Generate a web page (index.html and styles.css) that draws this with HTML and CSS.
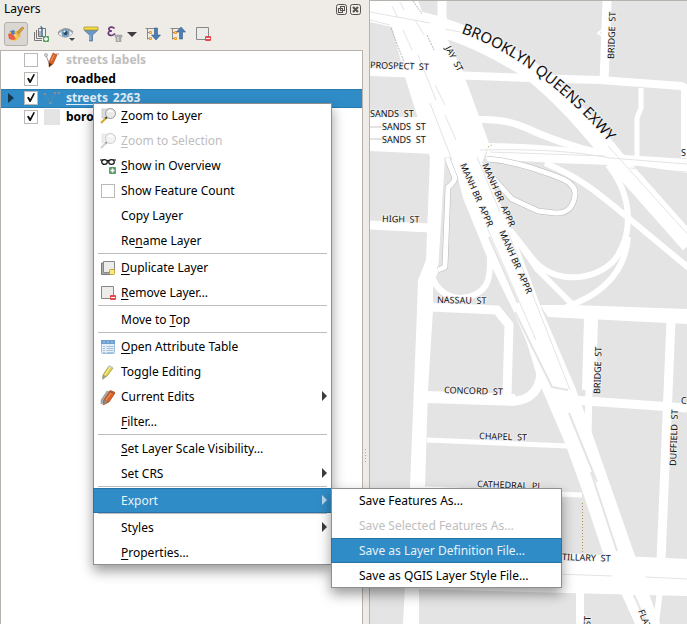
FILE: index.html
```html
<!DOCTYPE html>
<html lang="en">
<head>
<meta charset="utf-8">
<title>Layers</title>
<link rel="stylesheet" href="styles.css">
</head>
<body>
<svg class="defs" aria-hidden="true">
  <defs>
    <symbol id="i-brush" viewBox="0 0 16 16"><path d="M1 5l4 1 2 4 4-1-1 5-5 1-4-3z" fill="#f3c94c"/><path d="M0 8l4-1 4 6-3 1-4-1z" fill="#e8604a"/><path d="M2 5l4-1 2 3-3 2z" fill="#4b7fc0"/><path d="M6 6l3-1 4 4-2 3z" fill="#f1b73c"/><path d="M9 6l5-5 2 1-5 6z" fill="#d99a3a" stroke="#a8702a" stroke-width=".5"/></symbol>
    <symbol id="i-group" viewBox="0 0 16 16"><path d="M1.500 6v8.500H9M3.500 4v8.500H9" fill="none" stroke="#777"/><path d="M5.500 2.500h7v8h-7z" fill="#eee" stroke="#777"/><path d="M9 11V2.500q0-2-1.500-1.500" fill="none" stroke="#2f6598" stroke-width="1.400"/><path d="M7 5v6" stroke="#777"/><rect x="10" y="10" width="6" height="6" rx="1" fill="#5b9e66"/><path d="M13 11v4M11 13h4" stroke="#fff" stroke-width="1.300"/></symbol>
    <symbol id="i-eye" viewBox="0 0 18 16"><path d="M1 8Q8 0 16 7Q9 15 1 8z" fill="#f4f4f4" stroke="#aaa"/><path d="M1 7Q8-1 16 6" fill="none" stroke="#999" stroke-width="1.300"/><circle cx="8.500" cy="7" r="4" fill="#6f9cc4"/><circle cx="8.500" cy="7" r="2" fill="#28455f"/><circle cx="7.500" cy="5.500" r="1" fill="#fff"/><path d="M12 12h6l-3 3z" fill="#444"/></symbol>
    <symbol id="i-filter" viewBox="0 0 16 16"><path d="M1 4l5.500 5v6h3V9L15 4z" fill="#6c97c5" stroke="#50779f" stroke-width=".8"/><path d="M7 9v5" stroke="#a8c5e3"/><path d="M1 1h14v3H1z" fill="#f3dd3f" stroke="#a99b3b" stroke-width=".8"/></symbol>
    <symbol id="i-expr" viewBox="0 0 16 16"><path d="M7.500 2.500Q6 .8 4 1.200Q1.300 1.800 2 3.600Q2.500 5 5 5Q1 5 1.300 7.500Q1.800 9.500 4.500 9.500Q6.500 9.300 8 7.500" fill="none" stroke="#6a3c78" stroke-width="1.700"/><path d="M8 9h7v2l-1 1v4h-5v-4l-1-1z" fill="#aaa" stroke="#999" stroke-width=".5"/><path d="M11 11v4" stroke="#eee"/></symbol>
    <symbol id="i-expand" viewBox="0 0 16 16"><path d="M.5 2.500h9M2.500 2v11.500M2 6.500h3M2 12.500h3" fill="none" stroke="#888"/><path d="M4.500 5.500h2v2h-2zM4.500 11.500h2v2h-2z" fill="#fbe0a8" stroke="#f09a1e"/><path d="M9.500 2h3v7h3L11 14 6.500 9h3z" fill="#4b7db3" stroke="#37608c" stroke-width=".6"/></symbol>
    <symbol id="i-collapse" viewBox="0 0 16 16"><path d="M.5 2.500h9M2.500 2v11.500M2 6.500h3M2 12.500h3" fill="none" stroke="#888"/><path d="M4.500 5.500h2v2h-2zM4.500 11.500h2v2h-2z" fill="#fbe0a8" stroke="#f09a1e"/><path d="M9.500 13h3V6h3L11 1 6.500 6h3z" fill="#4b7db3" stroke="#37608c" stroke-width=".6"/></symbol>
    <symbol id="i-remove" viewBox="0 0 16 16"><path d="M1.500 1.500h12v12h-12z" fill="#ececea" stroke="#888"/><rect x="10" y="10" width="6" height="5" rx="1" fill="#e8474c"/><path d="M11 12.500h4" stroke="#fff"/></symbol>
    <symbol id="i-duplicate" viewBox="0 0 16 16"><path d="M1.500 3v11.500h10V3z" fill="#aaa" stroke="#777"/><path d="M3.500 1.500h11v11h-11z" fill="#ececea" stroke="#888"/><rect x="9.500" y="9.500" width="5" height="5" rx="1" fill="#f6e889" stroke="#c9a227"/></symbol>
    <symbol id="i-zoom" viewBox="0 0 16 16"><path d="M2 1h8v9H2z" fill="#ddd" stroke="#bbb" stroke-width=".6"/><path d="M6 10l-5 5" stroke="#d9a72b" stroke-width="2.200"/><path d="M7.500 8.500l-2 2" stroke="#444" stroke-width="2"/><circle cx="10.500" cy="5.500" r="5" fill="#e9e9e7" stroke="#999"/><path d="M8 4q2-2 5 0" stroke="#fff" fill="none" stroke-width="1.500"/></symbol>
    <symbol id="i-overview" viewBox="0 0 16 16"><path d="M0 2h3M7 3q1-1 2 0M13 2h3" fill="none" stroke="#111" stroke-width="1.200"/><ellipse cx="4.500" cy="4" rx="2.800" ry="2.400" fill="#fff" stroke="#111" stroke-width="1.200"/><ellipse cx="11.500" cy="4" rx="2.800" ry="2.400" fill="#fff" stroke="#111" stroke-width="1.200"/><rect x="9" y="9" width="7" height="7" rx="1" fill="#5b9e66"/><path d="M12.500 10.500v4M10.500 12.500h4" stroke="#fff" stroke-width="1.500"/></symbol>
    <symbol id="i-table" viewBox="0 0 16 16"><rect x="1.500" y="1.500" width="13" height="13" rx="1" fill="#e6eff8" stroke="#9bbfe0"/><path d="M1 1h14v4H1z" fill="#6d9fce"/><path d="M3 7.500h2M6.500 7.500h7M3 9.500h2M6.500 9.500h7M3 11.500h2M6.500 11.500h7M3 13.500h2M6.500 13.500h7" stroke="#a5c1dc"/><path d="M3 3h2M7 3h2M11 3h2" stroke="#a9cbea"/></symbol>
    <symbol id="i-pencil" viewBox="0 0 16 16"><path d="M3 11L9 2l4 2-6 8-4 3z" fill="#e3d655" stroke="#9c9540" stroke-width=".8"/><path d="M9 1l4 2-1 2-4-2z" fill="#c9c9c9"/><path d="M3 11l3 1-4 4z" fill="#999"/><path d="M5 11l5-8" stroke="#f7f0a0"/></symbol>
    <symbol id="i-pencils" viewBox="0 0 16 16"><path d="M1 11l6-9 3 1-6 10-3 2z" fill="#a8a8a8" stroke="#888" stroke-width=".5"/><path d="M4 11l6-9 5 2-6 9-6 3z" fill="#d8662c" stroke="#a5491a" stroke-width=".8"/><path d="M10 1l5 2-1 2-5-2z" fill="#b35a30"/><path d="M4 11l4 2-5 3z" fill="#888"/><path d="M6 11l5-7" stroke="#f09a62"/></symbol>
    <symbol id="i-editlayer" viewBox="0 0 16 16"><path d="M2 3l4 11 6-12h3" fill="none" stroke="#999"/><circle cx="2" cy="3" r="1.500" fill="#ddd" stroke="#888" stroke-width=".6"/><path d="M5 10l4-9 4 2-4 9-4 3z" fill="#dc6127" stroke="#ad4516" stroke-width=".6"/><path d="M5 11l3 1-3 3z" fill="#333"/><path d="M7 9l3-6" stroke="#f39b66"/></symbol>
    <symbol id="i-line" viewBox="0 0 16 16"><path d="M1.500 4l5 9 5-10h4" fill="none" stroke="#5c87a5" stroke-width="1"/><path d="M0 3h2v2H0zM5 12h3v2H5zM10 2h2v2h-2zM14 2h2v2h-2z" fill="#7d929f"/></symbol>
  </defs>
</svg>
<main class="window">
  <section class="dock">
    <header class="dock-title">
      <h1>Layers</h1>
      <button class="win-btn" aria-label="Float"><svg viewBox="0 0 11 11"><rect x=".5" y=".5" width="10" height="10" rx="2"/><rect x="4.500" y="2.500" width="4" height="4"/><rect x="2.500" y="4.500" width="4" height="4"/></svg></button>
      <button class="win-btn" aria-label="Close"><svg viewBox="0 0 11 11"><rect x=".5" y=".5" width="10" height="10" rx="2"/><path d="M3 3l5 5M8 3l-5 5" stroke-width="2"/></svg></button>
    </header>
    <div class="toolbar">
      <button class="tool pressed" aria-label="Open layer styling"><svg><use href="#i-brush"/></svg></button>
      <button class="tool" aria-label="Add group"><svg><use href="#i-group"/></svg></button>
      <button class="tool" aria-label="Manage map themes"><svg class="wide"><use href="#i-eye"/></svg></button>
      <button class="tool" aria-label="Filter legend"><svg><use href="#i-filter"/></svg></button>
      <button class="tool split" aria-label="Filter by expression"><svg><use href="#i-expr"/></svg><span class="drop"></span></button>
      <button class="tool" aria-label="Expand all"><svg><use href="#i-expand"/></svg></button>
      <button class="tool" aria-label="Collapse all"><svg><use href="#i-collapse"/></svg></button>
      <button class="tool" aria-label="Remove layer"><svg><use href="#i-remove"/></svg></button>
    </div>
    <ul class="tree">
      <li class="layer off"><span class="twisty"></span><input type="checkbox" id="l1"><svg><use href="#i-editlayer"/></svg><label for="l1">streets labels</label></li>
      <li class="layer"><span class="twisty"></span><input type="checkbox" id="l2" checked><span class="blank"></span><label for="l2">roadbed</label></li>
      <li class="layer current"><span class="twisty open"></span><input type="checkbox" id="l3" checked><svg><use href="#i-line"/></svg><label for="l3">streets_2263</label></li>
      <li class="layer"><span class="twisty"></span><input type="checkbox" id="l4" checked><span class="blank fill"></span><label for="l4">boro</label></li>
    </ul>
  </section>
  <div class="splitter"></div>
  <section class="map">
    <svg viewBox="370 1 317 623" preserveAspectRatio="xMinYMin slice">
      <g class="road">
        <path class="area" d="M370 0H418L422 12L447 18V38L462 70L489 143L482 163L512 230L542 310L575 387L592 433L612 490L633 550L660 624H635L603 553L582 490L565 443L538 380L527 343L513 310L487 257L463 198L458 178L446 157H430L405 77L392 27L370 22z"/>
        <path class="area" d="M428 145H450L445 157L438 272L433 283V310L428 390L425 487L419 590V624H403L410 487L417 310L418 280L426 260L430 157z"/>
        <path class="area" d="M370 117H432V154L370 151z"/>
        <path class="area" d="M540 305H572L687 309V324L548 317z"/>
        <path class="area" d="M415 548L600 555L687 559V596L415 589z"/>
        <path class="area" d="M488 143Q560 144 600 153L625 155L687 159V173L640 166L555 163L486 159z"/>
        <path d="M365 12C430 18 480 38 527 68C560 92 590 128 620 165L690 244" stroke-width="19"/>
        <path d="M370 72L530 78L600 80L681 86Q686 87 685 94V158" stroke-width="8"/>
        <path d="M607 0L604 82M442 0V25M671 320L664 490L661 560" stroke-width="9"/>
        <path d="M602 30l-4 3l4 3" stroke-width="2"/>
        <path d="M641 88V108L637 118V158" stroke-width="5"/>
        <path d="M470 120C510 117 525 128 540 134S580 150 610 155" stroke-width="7"/>
        <path d="M608 165C632 195 633 230 618 255S555 288 532 258L510 230" stroke-width="6"/>
        <path d="M545 163C585 180 600 195 626 216L690 269" stroke-width="6"/>
        <path d="M512 233L538 270L576 308M628 237Q624 287 566 307" stroke-width="6"/>
        <path d="M433 279C440 296 458 302 474 295S490 275 490 258" stroke-width="6"/>
        <path d="M370 225L430 228" stroke-width="9"/>
        <path d="M430 307L497 310L509 325L507 394" stroke-width="9"/>
        <path d="M427 397L515 400" stroke-width="12"/>
        <path d="M512 401C532 401 540 388 541 372" stroke-width="9"/>
        <path d="M427 440L568 446M425 489L582 495" stroke-width="5"/>
        <path d="M591 318L589 390" stroke-width="14"/>
        <path d="M589 385L588 440L596 470" stroke-width="7"/>
        <path d="M572 400L687 408" stroke-width="9"/>
        <path d="M580 590V624" stroke-width="8"/>
        <path d="M660 590L656 624" stroke-width="6"/>
      </g>
      <g class="cased">
        <path class="case" d="M487 159Q505 160 532 168C560 177 576 182 575 194S568 214 555 213L538 211L512 199L492 177"/>
        <path d="M487 159Q505 160 532 168C560 177 576 182 575 194S568 214 555 213L538 211L512 199L492 177"/>
        <path class="case" d="M447 158L455 178Q454 183 448 187L445 267L438 270"/>
        <path d="M447 158L455 178Q454 183 448 187L445 267L438 270"/>
      </g>
      <g class="median">
        <path d="M370 12L430 23M370 20L390 25M403 30L412 50M392 6L398 18M415 20L424 35M418 55L436 100M435 85L445 105M445 115L456 140M430 103L452 160M477 157L500 212M486 225L536 340M508 232L570 390M445 29L460 32M480 150Q560 148 610 158L687 164M630 168L687 172M608 146L690 237M490 152L605 156M400 2L404 10"/>
        <path class="wide" d="M370 127H390M370 139H390M489 237L518 303M515 312L552 387L568 390M569 413L597 482M591 472L617 551M634 595L645 620"/>
        <path d="M415 569L612 576M645 577L687 579"/>
      </g>
      <path class="dash" d="M391 28L404 62M413 1L422 14M427 35L434 50"/>
      <path class="trail" d="M582.500 503V553M488 147l4-2"/>
      <defs>
        <path id="bqe" d="M461 33C510 50 560 86 606 139L630 168"/>
      </defs>
      <g class="label">
        <text class="big"><textPath href="#bqe">BROOKLYN QUEENS EXWY</textPath></text>
        <text transform="translate(370 68) rotate(2)">PROSPECT&#160; ST</text>
        <text transform="translate(370 117)">SANDS&#160; ST</text>
        <text transform="translate(382 130)">SANDS&#160; ST</text>
        <text transform="translate(382 143)">SANDS&#160; ST</text>
        <text transform="translate(445 48) rotate(62)">JAY&#160; ST</text>
        <text transform="translate(614 59) rotate(-88)">BRIDGE&#160; ST</text>
        <text transform="translate(382 222) rotate(1)">HIGH&#160; ST</text>
        <text transform="translate(460 165) rotate(66)">MANH BR&#160; APPR</text>
        <text transform="translate(482 165) rotate(66)">MANH BR&#160; APPR</text>
        <text transform="translate(499 232) rotate(66)">MANH BR&#160; APPR</text>
        <text transform="translate(437 303) rotate(1)">NASSAU&#160; ST</text>
        <text transform="translate(444 393) rotate(2)">CONCORD&#160; ST</text>
        <text transform="translate(479 439) rotate(2)">CHAPEL&#160; ST</text>
        <text transform="translate(477 487) rotate(2)">CATHEDRAL&#160; PL</text>
        <text transform="translate(562 560) rotate(2)">TILLARY&#160; ST</text>
        <text transform="translate(600 394) rotate(-88)">BRIDGE&#160; ST</text>
        <text transform="translate(676 466) rotate(-88)">DUFFIELD&#160; ST</text>
        <text transform="translate(681 156)">S</text>
        <text transform="translate(681 404)">CO</text>
        <text transform="translate(638 611) rotate(68)">FLATBUSH&#160; AVE</text>
        <text transform="translate(589 661) rotate(-88)">BRIDGE ST</text>
      </g>
    </svg>
  </section>
  <nav class="menu context">
    <button><svg><use href="#i-zoom"/></svg><span><u>Z</u>oom to Layer</span></button>
    <button disabled><svg class="dim"><use href="#i-zoom"/></svg><span><u>Z</u>oom to Selection</span></button>
    <button><svg><use href="#i-overview"/></svg><span><u>S</u>how in Overview</span></button>
    <label class="check"><input type="checkbox"><span>Show Feature Count</span></label>
    <button><span>Copy Layer</span></button>
    <button><span>Re<u>n</u>ame Layer</span></button>
    <hr>
    <button><svg><use href="#i-duplicate"/></svg><span><u>D</u>uplicate Layer</span></button>
    <button><svg><use href="#i-remove"/></svg><span><u>R</u>emove Layer…</span></button>
    <hr>
    <button><span>Move to <u>T</u>op</span></button>
    <hr>
    <button><svg><use href="#i-table"/></svg><span><u>O</u>pen Attribute Table</span></button>
    <button><svg><use href="#i-pencil"/></svg><span>Toggle Editing</span></button>
    <button class="more"><svg><use href="#i-pencils"/></svg><span>Current Edits</span></button>
    <button><span><u>F</u>ilter…</span></button>
    <hr>
    <button><span><u>S</u>et Layer Scale Visibility…</span></button>
    <button class="more"><span>Set CRS</span></button>
    <hr>
    <div class="branch">
      <button class="more active"><span>Export</span></button>
      <nav class="menu sub">
        <button><span>Save Features As…</span></button>
        <button disabled><span>Save Selected Features As…</span></button>
        <button class="active"><span>Save as Layer Definition File…</span></button>
        <button><span>Save as QGIS Layer Style File…</span></button>
      </nav>
    </div>
    <hr>
    <button class="more"><span>Styles</span></button>
    <button><span><u>P</u>roperties…</span></button>
  </nav>
</main>
</body>
</html>
```
FILE: styles.css
```css
* { box-sizing: border-box; }

body {
  margin: 0;
  background: #efebe7;
  color: #000;
  font: 12px/16px "Noto Sans", sans-serif;
}

button {
  margin: 0;
  padding: 0;
  border: 0;
  background: none;
  color: inherit;
  font: inherit;
}

svg { display: block; flex: none; width: 16px; height: 16px; }
.defs { position: absolute; width: 0; height: 0; }

.window {
  position: relative;
  display: flex;
  height: 100vh;
  min-height: 600px;
  overflow: hidden;
}

.dock {
  display: flex;
  flex-direction: column;
  flex: none;
  width: 363px;
}

.dock-title {
  display: flex;
  align-items: center;
  gap: 3px;
  height: 20px;
  padding: 0 2px 2px 4px;
}

.dock-title h1 { flex: 1; margin: 0; font-size: 12px; font-weight: 400; }
.win-btn svg { width: 11px; height: 11px; fill: none; stroke: #55524f; }

.toolbar {
  display: flex;
  align-items: center;
  gap: 1px;
  height: 30px;
  padding: 0 4px 2px;
}

.tool {
  display: flex;
  align-items: center;
  justify-content: center;
  width: 24px;
  height: 24px;
  border-radius: 3px;
}

.tool.pressed { border: 1px solid #b4b0ac; background: #dad6d2; }
.tool .wide { width: 18px; }
.tool.split { gap: 4px; width: 36px; }
.drop { border: 5px solid transparent; border-top-color: #3c3c3c; border-bottom: 0; }

.tree {
  flex: 1;
  margin: 0;
  padding: 0;
  list-style: none;
  background: #fff;
  border: 1px solid #b6b2ae;
  border-bottom: 0;
}

.layer {
  display: flex;
  align-items: center;
  height: 19px;
  padding-bottom: 1px;
  font-weight: 700;
}

.layer.off { color: #bebebe; }
.layer.current {
  background: #308cc6;
  box-shadow: inset 0 1px #2a7cb0, inset 0 -1px #2a7cb0;
  color: #e0ecf5;
}
.layer.current label { text-decoration: underline; text-underline-offset: 2px; text-decoration-skip-ink: none; }

.twisty { width: 23px; height: 10px; }
.twisty.open::before {
  content: "";
  display: block;
  width: 0;
  margin-left: 7px;
  border: 5px solid transparent;
  border-left: 6px solid #16384f;
  border-right: 0;
}

input[type="checkbox"] {
  appearance: none;
  flex: none;
  width: 14px;
  height: 14px;
  margin: 0;
  border: 1px solid #bcb8b4;
  background: #fff;
}

input[type="checkbox"]:checked::after {
  content: "";
  display: block;
  width: 8px;
  height: 9px;
  margin: 1px 2px;
  background: #111;
  clip-path: polygon(0 50%, 20% 42%, 40% 66%, 82% 0, 100% 6%, 46% 100%, 32% 100%);
}

.layer svg, .blank { width: 16px; height: 16px; margin: 0 6px; }
.blank.fill { background: #e4e4e4; }

.splitter {
  flex: none;
  align-self: center;
  width: 3px;
  height: 16px;
  margin: 288px 2px 0 1px;
  background: radial-gradient(circle, #aaa 1px, transparent 1px) 0 0 / 3px 3px;
}

.map {
  flex: 1;
  min-width: 0;
  border: solid #b6b2ae;
  border-width: 1px 0 0 1px;
  background: #e4e4e4;
  overflow: hidden;
}

.map svg { width: 100%; height: 100%; }
.road path { fill: none; stroke: #fff; stroke-linejoin: round; }
.road .area { fill: #fff; stroke: none; }
.cased path { fill: none; stroke: #fff; stroke-width: 5px; stroke-linejoin: round; }
.cased .case { stroke: #b8b8b8; stroke-width: 6px; }
.median path { fill: none; stroke: #e4e4e4; stroke-width: 1px; }
.median .wide { stroke-width: 2px; }
.dash { fill: none; stroke: #b8b8b8; stroke-dasharray: 2 1; }
.trail { fill: none; stroke: #b0904e; stroke-dasharray: 1 2; }

.label text {
  fill: #111;
  font-family: "Noto Sans", sans-serif;
  font-size: 9px;
  paint-order: stroke;
  stroke: #f4f4f4;
  stroke-opacity: .7;
  stroke-width: 2px;
}

.label .big { font-size: 15px; }

.menu {
  position: absolute;
  z-index: 1;
  background: #fff;
  box-shadow: inset 0 0 0 1px #8f8f8f, 0 6px 12px rgba(0, 0, 0, .4);
}

.context { left: 93px; top: 103px; width: 239px; }
.sub { left: 238px; top: 0; width: 231px; }
.branch { position: relative; }

.menu button, .check {
  position: relative;
  display: flex;
  align-items: center;
  width: 100%;
  height: 25px;
  padding-left: 28px;
  text-align: left;
  white-space: nowrap;
}

.menu button svg { margin: 0 5px 0 -21px; }
.check input { margin: 0 6px 0 -20px; }
.menu button:disabled { color: #bebebe; }
.menu .dim { opacity: .5; filter: grayscale(1); }
.menu u { text-underline-offset: 2px; text-decoration-skip-ink: none; }

.menu .active {
  background: #308cc6;
  box-shadow: inset 0 0 0 1px #2874a6;
  color: #e8f2f9;
}

.more::after {
  content: "";
  margin: 0 5px 2px auto;
  border: 5px solid transparent;
  border-left-color: #3c3c3c;
  border-right: 0;
}

.more.active::after { border-left-color: #b8d8ec; }

.menu hr {
  height: 2px;
  margin: 0 5px;
  border: 0;
  border-top: 1px solid #bcbcbc;
}
```
